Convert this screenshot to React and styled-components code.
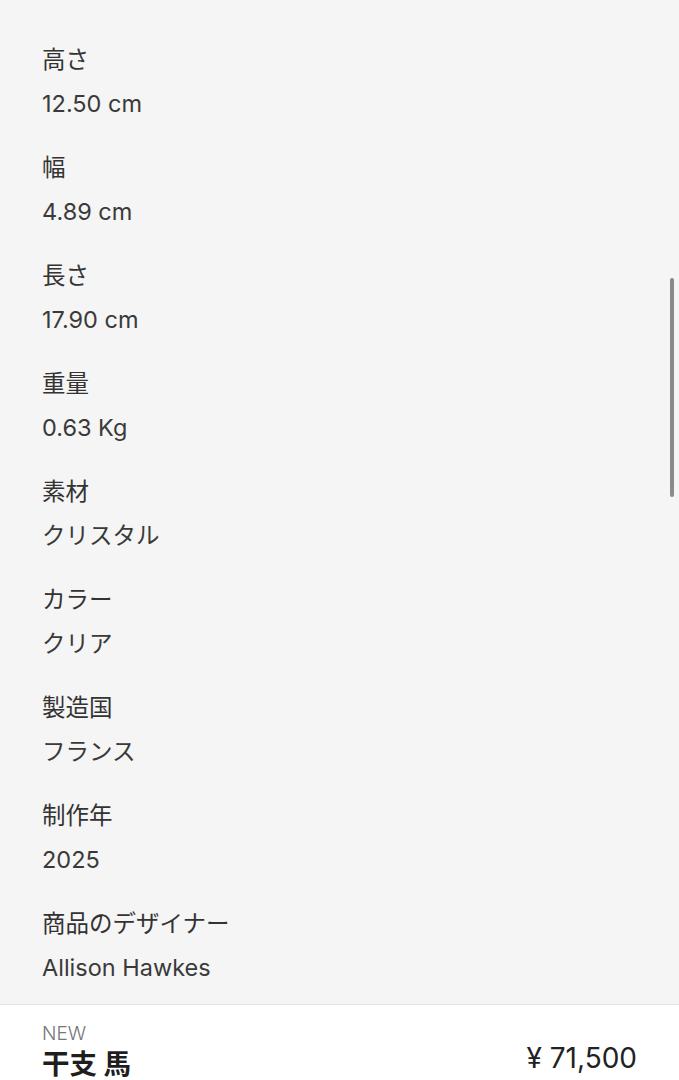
import styled, { createGlobalStyle } from 'styled-components'

const GlobalStyle = createGlobalStyle`
html, body {
    margin: 0;
    padding: 0;
    height: 100%;
}
body {
    font-family: 'Inter', 'Noto Sans CJK JP', sans-serif;
    background: #F5F5F5;
    color: #333333;
}
#root {
    height: 100%;
}
`

const Page = styled.div`
display: flex;
flex-direction: column;
height: 100vh;
`

const ScrollArea = styled.div`
position: relative;
flex: 1;
overflow: hidden;
background: #F5F5F5;
`

const SpecList = styled.dl`
margin: 0;
padding: 38px 42px 0;
`

const SpecItem = styled.div`
margin-bottom: 20px;
`

const Label = styled.dt`
font-size: 23.5px;
line-height: 44px;
color: #333333;
`

const Value = styled.dd`
margin: 0;
font-size: 23.5px;
line-height: 44px;
color: #3A3A3A;
`

const ScrollThumb = styled.div`
position: absolute;
top: 278px;
right: 5px;
width: 4px;
height: 219px;
border-radius: 2px;
background: #8A8A8A;
`

const BottomBar = styled.div`
display: flex;
justify-content: space-between;
align-items: flex-start;
height: 76px;
flex-shrink: 0;
padding: 0 42px;
background: #FFFFFF;
border-top: 1px solid #E2E2E2;
box-sizing: border-box;
`

const ProductInfo = styled.div`
display: flex;
flex-direction: column;
padding-top: 18px;
`

const Tag = styled.span`
font-size: 19px;
line-height: 22px;
font-weight: 300;
color: #777777;
`

const ProductName = styled.span`
font-size: 27.5px;
line-height: 38px;
font-weight: 700;
color: #1E1E1E;
`

const Price = styled.span`
padding-top: 35px;
font-size: 28px;
line-height: 36px;
color: #222222;
`

const specs = [
    { label: '高さ', value: '12.50 cm' },
    { label: '幅', value: '4.89 cm' },
    { label: '長さ', value: '17.90 cm' },
    { label: '重量', value: '0.63 Kg' },
    { label: '素材', value: 'クリスタル' },
    { label: 'カラー', value: 'クリア' },
    { label: '製造国', value: 'フランス' },
    { label: '制作年', value: '2025' },
    { label: '商品のデザイナー', value: 'Allison Hawkes' },
]

const App = () => {
    return (
        <>
            <GlobalStyle />
            <Page>
                <ScrollArea>
                    <SpecList>
                        {specs.map((spec) => (
                            <SpecItem key={spec.label}>
                                <Label>{spec.label}</Label>
                                <Value>{spec.value}</Value>
                            </SpecItem>
                        ))}
                    </SpecList>
                    <ScrollThumb />
                </ScrollArea>
                <BottomBar>
                    <ProductInfo>
                        <Tag>NEW</Tag>
                        <ProductName>干支 馬</ProductName>
                    </ProductInfo>
                    <Price>¥ 71,500</Price>
                </BottomBar>
            </Page>
        </>
    )
}

export default App
